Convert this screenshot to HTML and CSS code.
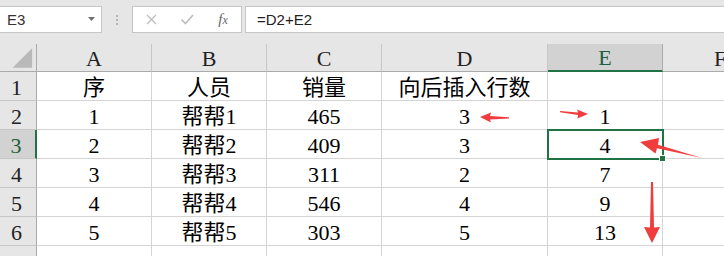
FILE: index.html
```html
<!DOCTYPE html>
<html lang="zh">
<head>
  <meta charset="UTF-8">
  <title>插入行数</title>
  <link rel="stylesheet" href="styles.css">
</head>
<body>
  <div class="app">
    <div class="formula-bar">
      <div class="name-box">
        <span class="name">E3</span>
        <svg class="caret" width="7" height="4" viewBox="0 0 7 4"><path d="M0 0h7L3.5 4z"/></svg>
      </div>
      <div class="grip"><i></i><i></i><i></i></div>
      <div class="fx-buttons">
        <svg width="11" height="11" viewBox="0 0 11 11"><path d="M1 1l9 9M10 1l-9 9" stroke="#bcbcbc" stroke-width="1.3" fill="none"/></svg>
        <svg width="14" height="11" viewBox="0 0 14 11"><path d="M1.5 5.5l4 4 7.5-8.5" stroke="#bcbcbc" stroke-width="1.6" fill="none"/></svg>
        <span class="fx">f<sub>x</sub></span>
      </div>
      <div class="formula-input">=D2+E2</div>
    </div>

    <div class="sheet">
      <div class="cell head corner"><svg width="37" height="28" viewBox="0 0 37 28"><path d="M33 4v20H13z" fill="#b9b9b9"/></svg></div>
      <div class="cell head">A</div>
      <div class="cell head">B</div>
      <div class="cell head">C</div>
      <div class="cell head">D</div>
      <div class="cell head col-active">E</div>
      <div class="cell head">F</div>

      <div class="cell head row-head">1</div>
      <div class="cell">序</div>
      <div class="cell">人员</div>
      <div class="cell">销量</div>
      <div class="cell">向后插入行数</div>
      <div class="cell"></div>
      <div class="cell"></div>

      <div class="cell head row-head">2</div>
      <div class="cell">1</div>
      <div class="cell">帮帮1</div>
      <div class="cell">465</div>
      <div class="cell">3</div>
      <div class="cell">1</div>
      <div class="cell"></div>

      <div class="cell head row-head row-active">3</div>
      <div class="cell">2</div>
      <div class="cell">帮帮2</div>
      <div class="cell">409</div>
      <div class="cell">3</div>
      <div class="cell selected">4</div>
      <div class="cell"></div>

      <div class="cell head row-head">4</div>
      <div class="cell">3</div>
      <div class="cell">帮帮3</div>
      <div class="cell">311</div>
      <div class="cell">2</div>
      <div class="cell">7</div>
      <div class="cell"></div>

      <div class="cell head row-head">5</div>
      <div class="cell">4</div>
      <div class="cell">帮帮4</div>
      <div class="cell">546</div>
      <div class="cell">4</div>
      <div class="cell">9</div>
      <div class="cell"></div>

      <div class="cell head row-head">6</div>
      <div class="cell">5</div>
      <div class="cell">帮帮5</div>
      <div class="cell">303</div>
      <div class="cell">5</div>
      <div class="cell">13</div>
      <div class="cell"></div>

      <!-- row 7: only its top edge is in view -->
      <div class="cell head row-head"></div>
      <div class="cell"></div>
      <div class="cell"></div>
      <div class="cell"></div>
      <div class="cell"></div>
      <div class="cell"></div>
      <div class="cell"></div>
    </div>

    <!-- red hand-drawn arrows laid over the sheet -->
    <svg class="marks" width="724" height="256" viewBox="0 0 724 256">
      <g fill="#f03c3c">
        <polygon points="480,117 491,112.5 490,116 509,117.3 509,118.5 490,119.5 491,122.5"/>
        <polygon points="588,114 577,109.5 578,112.5 560,111 560,112.3 578,115 577.5,118.5"/>
        <polygon points="640,142 659,138 658,144.8 702,158 657,148.2 655.5,153.5"/>
        <polygon points="652,243 644,227 650,227.5 651,182 653,182 654,227.5 660,227"/>
      </g>
    </svg>
  </div>
</body>
</html>
```

FILE: styles.css
```css
body { margin: 0; font-family: "Liberation Sans", "Noto Sans CJK SC", sans-serif; }
.app { position: relative; width: 724px; height: 256px; overflow: hidden; background: #fff; }

/* formula bar */
.formula-bar { display: flex; align-items: flex-start; height: 44px; padding-top: 6px; box-sizing: border-box; background: #e6e6e6; }
.name-box { width: 102px; height: 27px; box-sizing: border-box; border: 1px solid #c6c6c6; border-left: none; background: #fff; display: flex; align-items: center; justify-content: space-between; padding: 0 6px 0 7px; }
.name { font-size: 15px; color: #333; }
.caret { fill: #707070; margin-top: -1px; }
.grip { width: 30px; height: 27px; display: flex; flex-direction: column; align-items: center; justify-content: center; gap: 2px; }
.grip i { width: 2px; height: 2px; background: #b4b4b4; }
.fx-buttons { width: 110px; height: 27px; box-sizing: border-box; border: 1px solid #c6c6c6; background: #fff; display: grid; grid-template-columns: repeat(3, 36px); align-items: center; justify-items: center; }
.fx { font-family: "Liberation Serif", serif; font-style: italic; font-size: 15px; color: #666; line-height: 1; }
.fx sub { font-size: 12px; vertical-align: 0; }
.formula-input { flex: 1; margin-left: 3px; height: 27px; box-sizing: border-box; border: 1px solid #c6c6c6; border-right: none; background: #fff; padding-left: 11px; font-size: 15px; line-height: 25px; color: #222; }

/* sheet grid */
.sheet { display: grid; grid-template-columns: 37px 115px 115px 115px 166px 115px 115px; grid-template-rows: 28px repeat(7, 29px); font-family: "Liberation Serif", "Noto Sans CJK SC", serif; font-size: 22px; color: #000; }
.cell { border-right: 1px solid #d4d4d4; border-bottom: 1px solid #d4d4d4; display: flex; align-items: flex-end; justify-content: center; line-height: 24px; white-space: nowrap; }
.head { background: #e6e6e6; color: #222; border-right-color: #c6c6c6; border-bottom-color: #ababab; }
.corner { align-items: stretch; border-right-color: #ababab; }
.row-head { border-right-color: #ababab; border-bottom-color: #c6c6c6; padding-right: 3px; }
.col-active { background: #d2d2d2; color: #1f5f3d; border-right-color: #ababab; border-bottom: 2px solid #217346; }
.row-active { background: #d2d2d2; color: #1f5f3d; border-right: 2px solid #217346; }
.selected { position: relative; z-index: 1; outline: 2px solid #217346; outline-offset: -1px; }
.selected::after { content: ""; position: absolute; right: -4px; bottom: -4px; width: 5px; height: 5px; background: #217346; border: 1px solid #fff; }

.marks { position: absolute; left: 0; top: 0; z-index: 2; pointer-events: none; }
```
